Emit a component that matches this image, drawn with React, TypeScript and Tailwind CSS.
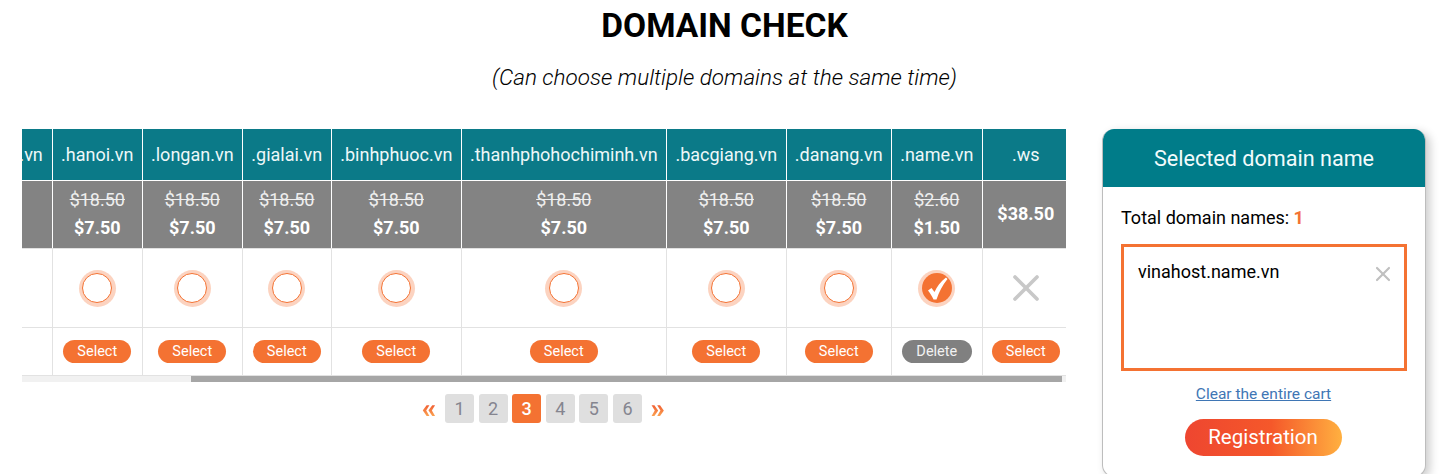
import { X } from "lucide-react";

type Domain = {
  name: string;
  oldPrice?: string;
  price: string;
  state?: "open" | "checked" | "blocked";
};

const DOMAINS: Domain[] = [
  { name: ".hanoi.vn", oldPrice: "$18.50", price: "$7.50" },
  { name: ".longan.vn", oldPrice: "$18.50", price: "$7.50" },
  { name: ".gialai.vn", oldPrice: "$18.50", price: "$7.50" },
  { name: ".binhphuoc.vn", oldPrice: "$18.50", price: "$7.50" },
  { name: ".thanhphohochiminh.vn", oldPrice: "$18.50", price: "$7.50" },
  { name: ".bacgiang.vn", oldPrice: "$18.50", price: "$7.50" },
  { name: ".danang.vn", oldPrice: "$18.50", price: "$7.50" },
  { name: ".name.vn", oldPrice: "$2.60", price: "$1.50", state: "checked" },
  { name: ".ws", price: "$38.50", state: "blocked" },
];

const COLS = "grid-cols-[30.8px_90px_100px_89px_130px_205px_120px_105px_91px_86px]";

function Radio({ state = "open" }: { state?: Domain["state"] }) {
  if (state === "blocked") {
    return <X className="h-[44px] w-[44px] text-[#c8c8c8]" strokeWidth={2} />;
  }
  return (
    <span className="flex h-[37px] w-[37px] items-center justify-center rounded-full bg-[#fcd3c0]">
      <span
        className={
          state === "checked"
            ? "flex h-[30px] w-[30px] items-center justify-center rounded-full bg-[#f47232]"
            : "h-[30px] w-[30px] rounded-full border border-[#f47232] bg-white"
        }
      >
        {state === "checked" ? (
          <svg viewBox="0 0 30 30" className="h-[30px] w-[30px]">
            <path d="M6 17.5 L9.5 15 L12.5 19 C15 13.5 18.5 8.5 24 4.5 L25.5 6 C20.5 12 17 19 14.5 26.5 L11.5 26.5 C10 23 8 20 6 17.5 Z" fill="#fff" />
          </svg>
        ) : null}
      </span>
    </span>
  );
}

function DomainTable() {
  return (
    <div className="w-[1044px] overflow-hidden">
      <div className={`grid h-[51px] ${COLS} bg-[#0b7a88] text-[18px] text-[#eef8f9]`}>
        <div className="flex items-center justify-end border-r border-white pr-[9px]">.vn</div>
        {DOMAINS.map((d) => (
          <div key={d.name} className="flex items-center justify-center border-r border-white last:border-r-0">
            {d.name}
          </div>
        ))}
      </div>
      <div className={`grid h-[69px] ${COLS} border-t border-b border-t-white border-b-[#e2e2e2] bg-[#838383] text-white`}>
        <div className="border-r border-white" />
        {DOMAINS.map((d) => (
          <div
            key={d.name}
            className="flex flex-col items-center justify-center gap-[7px] border-r border-white pb-[3px] text-[18px] leading-[21px] last:border-r-0"
          >
            {d.oldPrice ? <span className="text-[#eeeeee] line-through">{d.oldPrice}</span> : null}
            <span className="font-bold">{d.price}</span>
          </div>
        ))}
      </div>
      <div className={`grid h-[79px] ${COLS} border-b border-[#e2e2e2]`}>
        <div className="border-r border-[#e2e2e2]" />
        {DOMAINS.map((d) => (
          <div key={d.name} className="flex items-center justify-center border-r border-[#e2e2e2] last:border-r-0">
            <Radio state={d.state} />
          </div>
        ))}
      </div>
      <div className={`grid h-[48px] ${COLS} border-b border-[#e2e2e2]`}>
        <div className="border-r border-[#e2e2e2]" />
        {DOMAINS.map((d) => (
          <div key={d.name} className="flex items-center justify-center border-r border-[#e2e2e2] last:border-r-0">
            <span
              className={
                d.state === "checked"
                  ? "flex h-[23px] w-[70px] items-center justify-center rounded-full bg-[#808080] text-[14.5px] text-[#f2f2f2]"
                  : "flex h-[23px] w-[68px] items-center justify-center rounded-full bg-[#f47232] text-[14.5px] text-white"
              }
            >
              {d.state === "checked" ? "Delete" : "Select"}
            </span>
          </div>
        ))}
      </div>
      <div className="h-[6px] bg-[#f1f1f1] pl-[169px] pr-[4px]">
        <div className="h-full bg-[#a6a6a6]" />
      </div>
    </div>
  );
}

function Pagination() {
  const pages = [1, 2, 3, 4, 5, 6];
  const arrow =
    "bg-[linear-gradient(180deg,#ee4e2a_30%,#fba050_75%)] bg-clip-text text-[28px] leading-[29px] font-black text-transparent";
  return (
    <div className="mt-[12px] flex items-center justify-center gap-[4.6px] pr-[1px]">
      <span className={`mr-[4px] ${arrow}`}>«</span>
      {pages.map((p) => (
        <span
          key={p}
          className={
            p === 3
              ? "flex h-[29px] w-[29px] items-center justify-center rounded-[3px] bg-[#f47232] text-[18px] font-medium text-white"
              : "flex h-[29px] w-[29px] items-center justify-center rounded-[3px] bg-[#dfdfdf] text-[18px] text-[#85858f]"
          }
        >
          {p}
        </span>
      ))}
      <span className={`ml-[4px] ${arrow}`}>»</span>
    </div>
  );
}

function Cart() {
  return (
    <div className="h-[348px] w-[324px] shrink-0 overflow-hidden rounded-[12px] border border-t-0 border-[#bdbdbd] bg-white shadow-[4px_3px_10px_rgba(0,0,0,0.2)]">
      <div className="flex h-[58px] items-center justify-center bg-[#007c89] pt-[3px] text-[21.6px] text-[#f2fbfc]">
        Selected domain name
      </div>
      <div className="px-[18px]">
        <p className="mt-[19px] text-[18px] leading-[24px] text-black">
          Total domain names: <span className="font-bold text-[#f47232]">1</span>
        </p>
        <div className="mt-[14px] flex h-[127px] w-[286px] items-start justify-between border-[3px] border-[#f47232] pt-[13px] pr-[9px] pl-[14px]">
          <span className="text-[18px] leading-[24px] text-black">vinahost.name.vn</span>
          <X className="mt-[2px] h-[24px] w-[24px] text-[#c0c0c0]" strokeWidth={2.2} />
        </div>
        <div className="mt-[12px] pr-[1px] text-center text-[15.5px] leading-[22px]">
          <a className="text-[#3f76b5] underline">Clear the entire cart</a>
        </div>
        <div className="mt-[14px] flex justify-center pr-[2px]">
          <button className="h-[37px] w-[157px] rounded-full bg-[linear-gradient(90deg,#ee4630_0%,#f5582a_55%,#ffb040_100%)] text-[20.5px] text-white">
            Registration
          </button>
        </div>
      </div>
    </div>
  );
}

export default function App() {
  return (
    <div className="h-[474px] w-[1449px] overflow-hidden bg-white font-['Roboto',sans-serif] text-black">
      <h1 className="pt-[6px] text-center text-[33.5px] leading-[40px] font-bold">DOMAIN CHECK</h1>
      <p className="mt-[18px] text-center text-[22.5px] leading-[26px] font-light italic">
        (Can choose multiple domains at the same time)
      </p>
      <div className="mt-[39px] flex gap-[36px] pl-[22px]">
        <div className="w-[1044px]">
          <DomainTable />
          <Pagination />
        </div>
        <Cart />
      </div>
    </div>
  );
}
